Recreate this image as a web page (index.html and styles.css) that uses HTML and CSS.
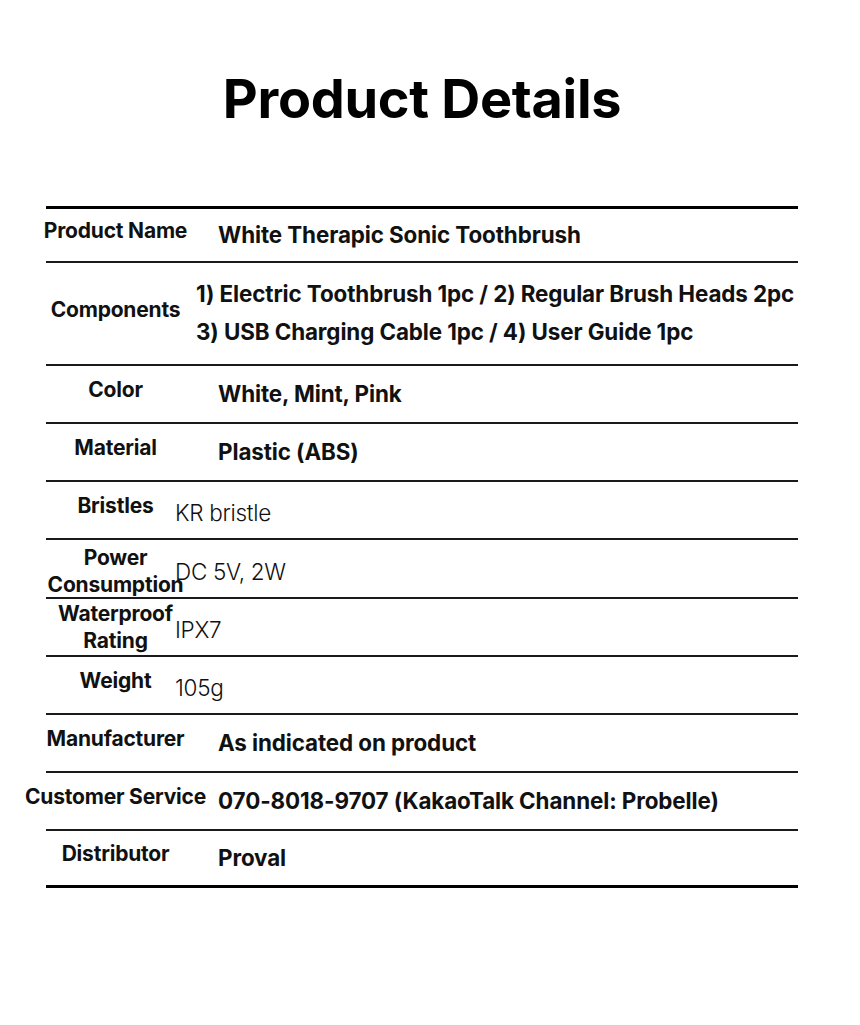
FILE: index.html
```html
<!DOCTYPE html>
<html lang="en">
<head>
<meta charset="utf-8">
<title>Product Details</title>
<link rel="stylesheet" href="styles.css">
</head>
<body>
<div class="page">
  <h1 class="title">Product Details</h1>
  <div class="spec">
    <div class="row r-first">
      <div class="label">Product Name</div>
      <div class="value bold">White Therapic Sonic Toothbrush</div>
    </div>
    <div class="row r-tall">
      <div class="label">Components</div>
      <div class="value bold comp">1) Electric Toothbrush 1pc / 2) Regular Brush Heads 2pc<br>3) USB Charging Cable 1pc / 4) User Guide 1pc</div>
    </div>
    <div class="row">
      <div class="label">Color</div>
      <div class="value bold">White, Mint, Pink</div>
    </div>
    <div class="row">
      <div class="label">Material</div>
      <div class="value bold">Plastic (ABS)</div>
    </div>
    <div class="row">
      <div class="label">Bristles</div>
      <div class="value light">KR bristle</div>
    </div>
    <div class="row r-59">
      <div class="label two low">Power<br>Consumption</div>
      <div class="value light">DC 5V, 2W</div>
    </div>
    <div class="row">
      <div class="label two">Waterproof<br>Rating</div>
      <div class="value light">IPX7</div>
    </div>
    <div class="row">
      <div class="label">Weight</div>
      <div class="value light">105g</div>
    </div>
    <div class="row">
      <div class="label">Manufacturer</div>
      <div class="value bold">As indicated on product</div>
    </div>
    <div class="row">
      <div class="label">Customer Service</div>
      <div class="value bold">070-8018-9707 (KakaoTalk Channel: Probelle)</div>
    </div>
    <div class="row r-last">
      <div class="label">Distributor</div>
      <div class="value bold">Proval</div>
    </div>
  </div>
</div>
</body>
</html>
```

FILE: styles.css
```css
* { box-sizing: border-box; }
html, body { margin: 0; padding: 0; background: #fff; }
body {
  font-family: Inter, "Noto Sans", "Liberation Sans", sans-serif;
  color: #111;
}
.page {
  width: 860px;
  padding: 0 62px 0 46px;
}
.title {
  margin: 69px 0 0 0;
  height: 60px;
  font-size: 54px;
  line-height: 60px;
  font-weight: 700;
  text-align: center;
  color: #000;
  letter-spacing: -0.3px;
}
.spec {
  margin-top: 77px;
  border-top: 3px solid #000;
  border-bottom: 3px solid #000;
}
.row {
  display: grid;
  grid-template-columns: 129px 1fr;
  height: 58px;
  border-bottom: 2px solid #1a1a1a;
}
.row.r-first { height: 54px; }
.row.r-tall { height: 103px; }
.row.r-59 { height: 59px; }
.row.r-last { height: 54px; border-bottom: none; }
.label {
  display: flex;
  align-items: center;
  justify-content: center;
  padding: 0 0 8px 10px;
  font-size: 21px;
  font-weight: 700;
  line-height: 26px;
  white-space: nowrap;
  text-align: center;
  letter-spacing: -0.2px;
}
.label.two { padding-bottom: 0; line-height: 27px; }
.label.two.low { padding-top: 4px; }
.value {
  display: flex;
  align-items: center;
  white-space: nowrap;
}
.value.bold {
  padding: 0 0 2px 43px;
  font-size: 22.4px;
  font-weight: 700;
  letter-spacing: -0.1px;
}
.value.comp {
  padding-left: 21px;
  line-height: 38px;
}
.value.light {
  padding: 4px 0 0 0;
  font-size: 22.5px;
  font-weight: 300;
  letter-spacing: -0.3px;
}
```
